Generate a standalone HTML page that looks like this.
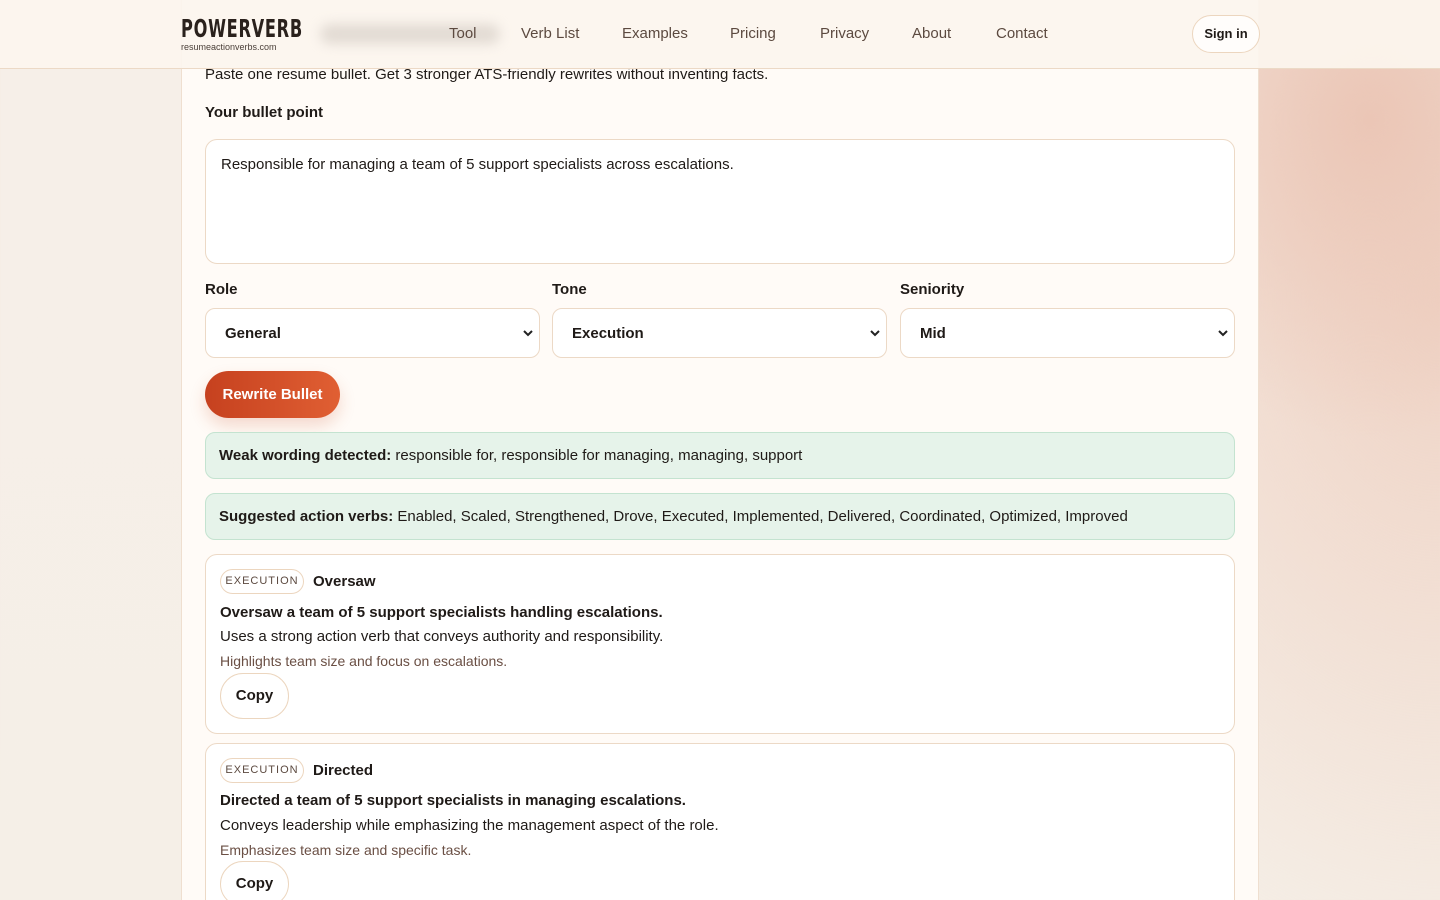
<!DOCTYPE html>
<html><head><meta charset="utf-8"><style>
*{box-sizing:border-box;margin:0;padding:0}
html,body{width:1440px;height:900px;overflow:hidden}
body{font-family:"Liberation Sans",sans-serif;color:#1f1a17;position:relative;
background:radial-gradient(ellipse 260px 320px at 1370px 120px,#ebc6b6 0%,rgba(235,198,182,0) 100%),
radial-gradient(ellipse 500px 700px at 1440px 300px,#efd3c5 0%,rgba(239,211,197,0) 100%),
linear-gradient(180deg,#f6efe8,#f5efe7);}
.hdr{position:absolute;left:0;top:0;width:1440px;height:69px;background:rgba(252,245,238,.93);border-bottom:1px solid #ecd9c6;z-index:5}
.logo{position:absolute;left:181px;top:14px;font-weight:bold;font-size:25px;letter-spacing:1px;color:#2a211c;transform:scaleX(.72);transform-origin:left;font-family:"DejaVu Sans Condensed","Liberation Sans",sans-serif}
.sub{position:absolute;left:181px;top:42px;font-size:9px;color:#4a3f38}
.blur{position:absolute;left:320px;top:24px;width:180px;height:20px;border-radius:10px;background:#c9c0b8;filter:blur(6px);opacity:.5}
.nav a{position:absolute;top:25px;font-size:15px;color:#5c4a40;text-decoration:none}
.sign{position:absolute;left:1192px;top:15px;width:68px;height:38px;border:1px solid #ecd6bf;border-radius:19px;background:#fffdfb;font-weight:bold;font-size:13px;text-align:center;line-height:36px}
.card{position:absolute;left:181px;top:0;width:1078px;height:900px;background:#fffbf7;border-left:1px solid #efdfd0;border-right:1px solid #efdfd0}
.t{position:absolute;font-size:15px;white-space:nowrap}
.b{font-weight:bold}
.ta{position:absolute;left:205px;top:139px;width:1030px;height:125px;background:#fff;border:1px solid #ecd9c6;border-radius:12px;padding:16px 15px;font-size:15px}
.sel{position:absolute;top:308px;width:335px;height:50px;background:#fff;border:1px solid #ecd9c6;border-radius:10px;padding:16px 19px;font-size:15px;font-weight:bold}
.sel svg{position:absolute;right:5px;top:20px}
.btn{position:absolute;left:205px;top:371px;width:135px;height:47px;border-radius:24px;background:linear-gradient(90deg,#c6411f,#e05f33);color:#fff;font-weight:bold;font-size:15px;text-align:center;line-height:47px;box-shadow:0 8px 16px rgba(200,80,40,.2)}
.note{position:absolute;left:205px;width:1030px;height:47px;background:#e6f3ea;border:1px solid #c4e3d0;border-radius:10px;padding:0 13px;line-height:45px;font-size:15px;white-space:nowrap}
.res{position:absolute;left:205px;width:1030px;background:#fff;border:1px solid #ecd9c6;border-radius:12px}
.pill{position:absolute;left:14px;top:14px;width:84px;height:25px;border:1px solid #ecd6bf;border-radius:13px;font-size:11px;letter-spacing:1px;color:#5c4a40;text-align:center;line-height:23px}
.copy{position:absolute;left:14px;width:69px;height:46px;border:1px solid #ecd6bf;border-radius:23px;background:#fff;font-weight:bold;font-size:15px;text-align:center;line-height:44px}
.br{color:#6a4f44}
</style></head><body>
<div class="card"></div>
<div class="hdr">
<div class="logo">POWERVERB</div><div class="sub">resumeactionverbs.com</div>
<div class="blur"></div>
<div class="nav"><a style="left:449px">Tool</a><a style="left:521px">Verb List</a><a style="left:622px">Examples</a><a style="left:730px">Pricing</a><a style="left:820px">Privacy</a><a style="left:912px">About</a><a style="left:996px">Contact</a></div>
<div class="sign">Sign in</div>
</div>
<div class="t" style="left:205px;top:66px">Paste one resume bullet. Get 3 stronger ATS-friendly rewrites without inventing facts.</div>
<div class="t b" style="left:205px;top:104px">Your bullet point</div>
<div class="ta">Responsible for managing a team of 5 support specialists across escalations.</div>
<div class="t b" style="left:205px;top:281px">Role</div>
<div class="t b" style="left:552px;top:281px">Tone</div>
<div class="t b" style="left:900px;top:281px">Seniority</div>
<div class="sel" style="left:205px">General<svg width="12" height="8" viewBox="0 0 12 8"><path d="M2 2l4 4 4-4" stroke="#222" stroke-width="2" fill="none"/></svg></div>
<div class="sel" style="left:552px">Execution<svg width="12" height="8" viewBox="0 0 12 8"><path d="M2 2l4 4 4-4" stroke="#222" stroke-width="2" fill="none"/></svg></div>
<div class="sel" style="left:900px">Mid<svg width="12" height="8" viewBox="0 0 12 8"><path d="M2 2l4 4 4-4" stroke="#222" stroke-width="2" fill="none"/></svg></div>
<div class="btn">Rewrite Bullet</div>
<div class="note" style="top:432px"><b>Weak wording detected:</b> responsible for, responsible for managing, managing, support</div>
<div class="note" style="top:493px"><b>Suggested action verbs:</b> Enabled, Scaled, Strengthened, Drove, Executed, Implemented, Delivered, Coordinated, Optimized, Improved</div>
<div class="res" style="top:554px;height:180px">
<div class="pill">EXECUTION</div>
<div class="t b" style="left:107px;top:18px">Oversaw</div>
<div class="t b" style="left:14px;top:49px">Oversaw a team of 5 support specialists handling escalations.</div>
<div class="t" style="left:14px;top:73px">Uses a strong action verb that conveys authority and responsibility.</div>
<div class="t br" style="left:14px;top:98px;font-size:14px">Highlights team size and focus on escalations.</div>
<div class="copy" style="top:118px">Copy</div>
</div>
<div class="res" style="top:743px;height:180px">
<div class="pill">EXECUTION</div>
<div class="t b" style="left:107px;top:18px">Directed</div>
<div class="t b" style="left:14px;top:48px">Directed a team of 5 support specialists in managing escalations.</div>
<div class="t" style="left:14px;top:73px">Conveys leadership while emphasizing the management aspect of the role.</div>
<div class="t br" style="left:14px;top:98px;font-size:14px">Emphasizes team size and specific task.</div>
<div class="copy" style="top:117px">Copy</div>
</div>
</body></html>
